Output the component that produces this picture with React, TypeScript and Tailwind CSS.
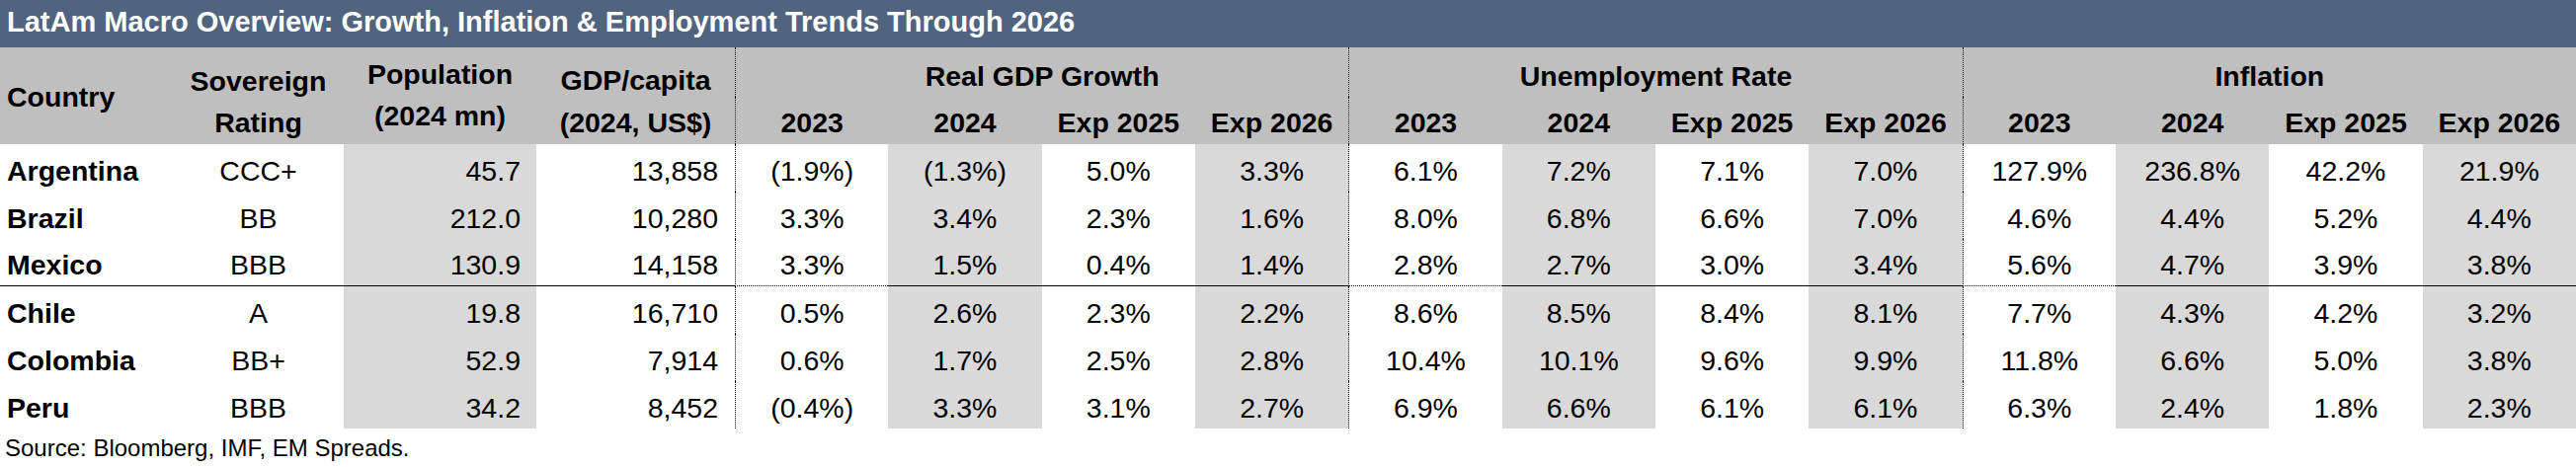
import React from 'react';

const rows = [
  { country: 'Argentina', rating: 'CCC+', pop: '45.7', gdp: '13,858', growth: ['(1.9%)', '(1.3%)', '5.0%', '3.3%'], unemp: ['6.1%', '7.2%', '7.1%', '7.0%'], infl: ['127.9%', '236.8%', '42.2%', '21.9%'] },
  { country: 'Brazil', rating: 'BB', pop: '212.0', gdp: '10,280', growth: ['3.3%', '3.4%', '2.3%', '1.6%'], unemp: ['8.0%', '6.8%', '6.6%', '7.0%'], infl: ['4.6%', '4.4%', '5.2%', '4.4%'] },
  { country: 'Mexico', rating: 'BBB', pop: '130.9', gdp: '14,158', growth: ['3.3%', '1.5%', '0.4%', '1.4%'], unemp: ['2.8%', '2.7%', '3.0%', '3.4%'], infl: ['5.6%', '4.7%', '3.9%', '3.8%'] },
  { country: 'Chile', rating: 'A', pop: '19.8', gdp: '16,710', growth: ['0.5%', '2.6%', '2.3%', '2.2%'], unemp: ['8.6%', '8.5%', '8.4%', '8.1%'], infl: ['7.7%', '4.3%', '4.2%', '3.2%'] },
  { country: 'Colombia', rating: 'BB+', pop: '52.9', gdp: '7,914', growth: ['0.6%', '1.7%', '2.5%', '2.8%'], unemp: ['10.4%', '10.1%', '9.6%', '9.9%'], infl: ['11.8%', '6.6%', '5.0%', '3.8%'] },
  { country: 'Peru', rating: 'BBB', pop: '34.2', gdp: '8,452', growth: ['(0.4%)', '3.3%', '3.1%', '2.7%'], unemp: ['6.9%', '6.6%', '6.1%', '6.1%'], infl: ['6.3%', '2.4%', '1.8%', '2.3%'] },
];

const groups = ['Real GDP Growth', 'Unemployment Rate', 'Inflation'];
const years = ['2023', '2024', 'Exp 2025', 'Exp 2026'];

export default function App() {
  return (
    <div className="w-[2608px] bg-white text-black font-['Liberation_Sans',Arial,sans-serif]">
      <div className="h-[48px] bg-[#506480] text-white font-bold text-[29px] flex items-center pl-[7px] pb-[2px]">
        LatAm Macro Overview: Growth, Inflation &amp; Employment Trends Through 2026
      </div>

      <div className="grid grid-cols-[175px_173px_195px_201px_repeat(12,1fr)] grid-rows-[50px_48px_repeat(6,48px)] text-[28.5px]">
        {/* header */}
        <div className="row-span-2 bg-[#bfbfbf] font-bold flex items-center pl-[7px] pt-[2px]">Country</div>
        <div className="row-span-2 bg-[#bfbfbf] font-bold flex flex-col items-center justify-end leading-[42px] pb-[1px]">
          <span>Sovereign</span>
          <span>Rating</span>
        </div>
        <div className="row-span-2 bg-[#bfbfbf] font-bold flex flex-col items-center justify-end leading-[42px] pb-[8px]">
          <span>Population</span>
          <span>(2024 mn)</span>
        </div>
        <div className="row-span-2 bg-[#bfbfbf] font-bold flex flex-col items-center justify-end leading-[43px]">
          <span>GDP/capita</span>
          <span>(2024, US$)</span>
        </div>
        {groups.map(g => (
          <div key={g} className="col-span-4 bg-[#bfbfbf] font-bold flex items-center justify-center pt-[8px] border-l border-dotted border-black">
            {g}
          </div>
        ))}
        {groups.map(g =>
          years.map((y, i) => (
            <div
              key={g + y}
              className={`bg-[#bfbfbf] font-bold flex items-center justify-center pt-[4px] ${i === 0 ? 'border-l border-dotted border-black' : ''}`}
            >
              {y}
            </div>
          ))
        )}

        {/* data */}
        {rows.map((r, ri) => {
          const line = ri === 2 ? 'border-b border-black' : '';
          return (
            <React.Fragment key={r.country}>
              <div className={`font-bold flex items-center pl-[7px] pt-[6px] ${line}`}>{r.country}</div>
              <div className={`flex items-center justify-center pt-[6px] ${line}`}>{r.rating}</div>
              <div className={`bg-[#d9d9d9] flex items-center justify-end pr-[16px] pt-[6px] ${line}`}>{r.pop}</div>
              <div className={`flex items-center justify-end pr-[17px] pt-[6px] ${line}`}>{r.gdp}</div>
              {[r.growth, r.unemp, r.infl].map((vals, gi) =>
                vals.map((v, i) => (
                  <div
                    key={`${gi}-${i}`}
                    className={`flex items-center justify-center pt-[6px] ${i % 2 === 1 ? 'bg-[#d9d9d9]' : ''} ${i === 0 ? 'border-l border-dotted border-black' : ''} ${line}`}
                  >
                    {v}
                  </div>
                ))
              )}
            </React.Fragment>
          );
        })}
      </div>

      <div className="h-[39px] flex items-center pl-[5px] text-[24px]">Source: Bloomberg, IMF, EM Spreads.</div>
    </div>
  );
}
